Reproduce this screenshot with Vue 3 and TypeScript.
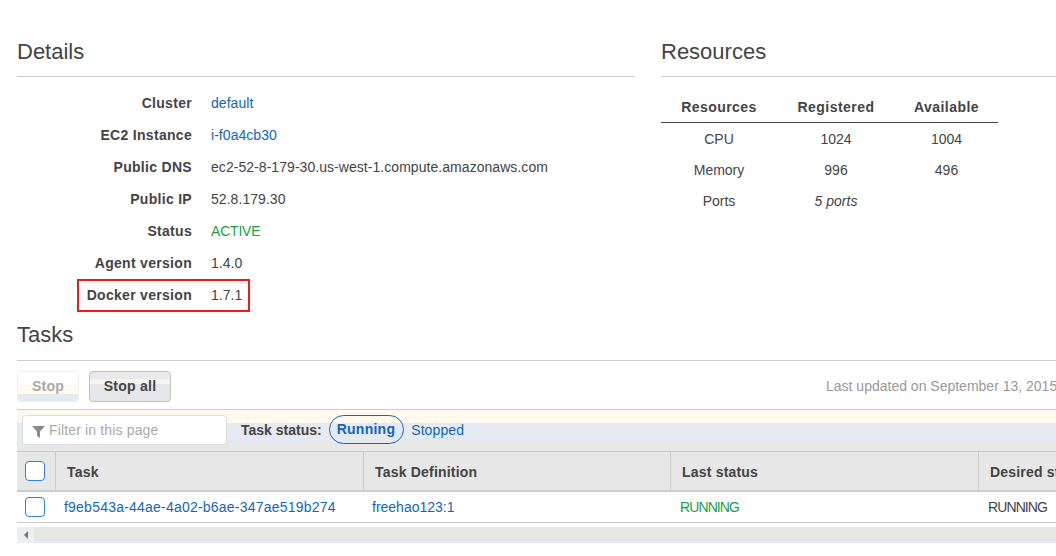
<template>
  <div class="page">
    <div class="top">
      <section class="details">
        <h2 class="heading">Details</h2>
        <dl class="facts">
          <div v-for="fact in facts" :key="fact.label" class="fact" :class="{ 'fact--marked': fact.marked }">
            <dt>{{ fact.label }}</dt>
            <dd :class="fact.kind">{{ fact.value }}</dd>
          </div>
        </dl>
      </section>
      <section class="resources">
        <h2 class="heading">Resources</h2>
        <table class="res-table">
          <thead>
            <tr>
              <th class="res-col-1">Resources</th>
              <th class="res-col-2">Registered</th>
              <th class="res-col-3">Available</th>
            </tr>
          </thead>
          <tbody>
            <tr v-for="row in resources" :key="row.name">
              <td>{{ row.name }}</td>
              <td :class="{ italic: row.name === 'Ports' }">{{ row.registered }}</td>
              <td>{{ row.available }}</td>
            </tr>
          </tbody>
        </table>
      </section>
    </div>

    <section class="tasks">
      <h2 class="heading">Tasks</h2>
      <div class="actions">
        <button class="btn btn--off" type="button">Stop</button>
        <button class="btn btn--on" type="button">Stop all</button>
        <span class="updated">Last updated on September 13, 2015 6:21:04 PM (0m ago)</span>
      </div>

      <div class="filter-bar">
        <div class="filter-input">
          <svg class="funnel" width="13" height="13" viewBox="0 0 13 13">
            <path d="M0 1h13L8 6.5V13L5 11V6.5z" fill="#8a8a8a" />
          </svg>
          <span>Filter in this page</span>
        </div>
        <strong class="status-label">Task status:</strong>
        <span class="pill">Running</span>
        <span class="stopped">Stopped</span>
      </div>

      <div class="grid grid--head">
        <div class="check-cell"><span class="check"></span></div>
        <div v-for="col in columns" :key="col" class="head-cell">{{ col }}</div>
      </div>
      <div class="grid grid--row">
        <div class="check-cell"><span class="check"></span></div>
        <div class="cell link task-id">f9eb543a-44ae-4a02-b6ae-347ae519b274</div>
        <div class="cell link">freehao123:1</div>
        <div class="cell cell--wide status green">RUNNING</div>
        <div class="cell cell--wide status">RUNNING</div>
      </div>

      <div class="scrollbar">
        <span class="scroll-btn"><i class="arrow"></i></span>
      </div>
    </section>
  </div>
</template>

<script setup lang="ts">
interface Fact {
  label: string
  value: string
  kind?: string
  marked?: boolean
}

const facts: Fact[] = [
  { label: 'Cluster', value: 'default', kind: 'link' },
  { label: 'EC2 Instance', value: 'i-f0a4cb30', kind: 'link' },
  { label: 'Public DNS', value: 'ec2-52-8-179-30.us-west-1.compute.amazonaws.com' },
  { label: 'Public IP', value: '52.8.179.30' },
  { label: 'Status', value: 'ACTIVE', kind: 'green' },
  { label: 'Agent version', value: '1.4.0' },
  { label: 'Docker version', value: '1.7.1', marked: true },
]

const resources = [
  { name: 'CPU', registered: '1024', available: '1004' },
  { name: 'Memory', registered: '996', available: '496' },
  { name: 'Ports', registered: '5 ports', available: '' },
]

const columns = ['Task', 'Task Definition', 'Last status', 'Desired status']
</script>

<style>
html,
body {
  margin: 0;
  background: #fff;
  overflow: hidden;
}
</style>

<style scoped>
.page {
  width: 1056px;
  height: 556px;
  overflow: hidden;
  box-sizing: border-box;
  padding-left: 17px;
  font-family: "Liberation Sans", Arial, sans-serif;
  font-size: 14px;
  color: #444;
  background: #fff;
}

.top {
  display: flex;
  gap: 26px;
  padding-top: 40px;
}

.details {
  flex: 0 0 618px;
}

.resources {
  flex: 0 0 500px;
}

.heading {
  margin: 0;
  height: 24px;
  padding-bottom: 12px;
  border-bottom: 1px solid #ccc;
  font-size: 22px;
  font-weight: 400;
  line-height: 24px;
  color: #444;
}

.facts {
  margin: 10px 0 0;
}

.fact {
  position: relative;
  display: flex;
  height: 32px;
  align-items: center;
}

.fact dt {
  width: 175px;
  text-align: right;
  font-weight: 700;
  letter-spacing: 0.3px;
}

.fact dd {
  margin: 0 0 0 19px;
  letter-spacing: 0.05px;
}

.fact--marked::after {
  content: "";
  position: absolute;
  left: 60px;
  top: 0;
  width: 169px;
  height: 29px;
  border: 2px solid #ed1c24;
}

.link {
  color: #1166bb;
}

.green {
  color: #1d9d3e;
}

.fact dd.green {
  letter-spacing: -0.2px;
}

.italic {
  font-style: italic;
}

.res-table {
  width: 337px;
  margin-top: 15px;
  border-collapse: collapse;
  table-layout: fixed;
}

.res-table th {
  height: 30px;
  padding: 0;
  border-bottom: 1px solid #444;
  font-weight: 700;
  letter-spacing: 0.45px;
  text-align: center;
}

.res-col-1 {
  width: 116px;
}

.res-col-2 {
  width: 118px;
}

.res-table td {
  height: 31px;
  padding: 0;
  text-align: center;
}

.tasks {
  margin-top: 12px;
  width: 1100px;
}

.tasks .heading {
  padding-bottom: 13px;
}

.actions {
  display: flex;
  align-items: center;
  gap: 10px;
  height: 31px;
  margin-top: 10px;
}

.btn {
  flex: none;
  height: 31px;
  box-sizing: border-box;
  padding: 0 0 2px;
  border-radius: 4px;
  font: 700 14px "Liberation Sans", Arial, sans-serif;
  letter-spacing: 0.25px;
  white-space: nowrap;
}

.btn--off {
  width: 62px;
  border: 1px solid #eee;
  color: #aaa;
  background: linear-gradient(#fff 0 13px, #fff9ee 13px 22px, #e5e9f1 22px);
}

.btn--on {
  width: 82px;
  border: 1px solid #c0c0c0;
  color: #444;
  background: linear-gradient(#e9e9e9 0 7px, #f6f4ee 7px 12px, #e4e6ea 12px);
}

.updated {
  margin: 0 0 2px 645px;
  white-space: nowrap;
  color: #999;
}

.filter-bar {
  display: flex;
  align-items: center;
  height: 39px;
  margin-top: 7px;
  padding: 0 0 2px 5px;
  border-top: 1px solid #ccc;
  background: linear-gradient(#fff9ee 0 13px, #e5e9f1 13px 31px, #e8e8e8 31px);
}

.filter-input {
  display: flex;
  align-items: center;
  gap: 4px;
  box-sizing: border-box;
  width: 205px;
  height: 30px;
  padding-left: 9px;
  border: 1px solid #ddd;
  border-radius: 4px;
  background: #fff;
  color: #aaa;
  letter-spacing: 0.15px;
}

.funnel {
  margin-top: 3px;
}

.status-label {
  margin-left: 14px;
}

.pill {
  box-sizing: border-box;
  height: 29px;
  margin-left: 7px;
  padding: 0 8px 0 7px;
  border: 1px solid #1166bb;
  border-radius: 15px;
  color: #1166bb;
  font-weight: 700;
  letter-spacing: 0.25px;
  line-height: 26px;
}

.stopped {
  margin-left: 7px;
  letter-spacing: 0.1px;
  color: #1166bb;
}

.grid {
  display: grid;
  grid-template-columns: 38px 308px 307px 308px 1fr;
}

.grid--head {
  height: 38px;
  border-top: 1px solid #ccc;
  border-bottom: 2px solid #ccc;
  background: #e7e7e7;
}

.grid--row {
  height: 30px;
  border-bottom: 1px solid #ccc;
}

.check-cell {
  display: flex;
  align-items: center;
  padding-left: 8px;
}

.check {
  box-sizing: border-box;
  width: 20px;
  height: 20px;
  border: 1px solid #2f80d8;
  border-radius: 4px;
  background: #fff;
}

.head-cell {
  display: flex;
  align-items: center;
  padding: 2px 0 0 11px;
  border-left: 1px solid #ccc;
  font-weight: 700;
  letter-spacing: 0.2px;
}

.cell {
  display: flex;
  align-items: center;
  padding-left: 9px;
}

.cell--wide {
  padding-left: 10px;
}

.task-id {
  letter-spacing: 0.22px;
}

.status {
  letter-spacing: -0.9px;
}

.scrollbar {
  display: flex;
  height: 16px;
  margin-top: 4px;
  background: linear-gradient(#e6e6e6 0 14px, #e5e9f1 14px);
}

.scroll-btn {
  display: flex;
  align-items: center;
  justify-content: center;
  width: 17px;
  background: #eceef2;
}

.arrow {
  width: 0;
  height: 0;
  border-top: 4px solid transparent;
  border-bottom: 4px solid transparent;
  border-right: 4px solid #777;
}
</style>
